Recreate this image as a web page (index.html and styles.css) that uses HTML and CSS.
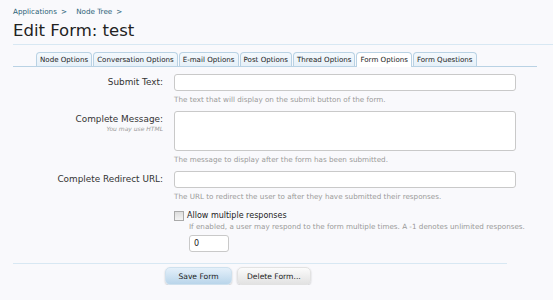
FILE: index.html
```
<!DOCTYPE html>
<html lang="en">
<head>
    <meta charset="UTF-8">
    <title>Edit Form: test</title>
    <link rel="stylesheet" href="styles.css">
</head>
<body>
    <div class="page">
        <div class="breadcrumb">
            <a href="#">Applications</a><span class="sep">&gt;</span>
            <a href="#">Node Tree</a><span class="sep">&gt;</span>
        </div>
        <h1 class="title">Edit Form: test</h1>

        <ul class="tabs">
            <li class="tab">Node Options</li>
            <li class="tab">Conversation Options</li>
            <li class="tab">E-mail Options</li>
            <li class="tab">Post Options</li>
            <li class="tab">Thread Options</li>
            <li class="tab active">Form Options</li>
            <li class="tab">Form Questions</li>
        </ul>

        <form class="form">
            <div class="ctrl-unit">
                <label class="ctrl-label" for="submit_text">Submit Text:</label>
                <div class="ctrl-body">
                    <input type="text" id="submit_text" class="text-input">
                    <p class="explain">The text that will display on the submit button of the form.</p>
                </div>
            </div>

            <div class="ctrl-unit">
                <div class="ctrl-label">
                    <label for="complete_message">Complete Message:</label>
                    <span class="hint">You may use HTML</span>
                </div>
                <div class="ctrl-body">
                    <textarea id="complete_message" class="text-input textarea"></textarea>
                    <p class="explain">The message to display after the form has been submitted.</p>
                </div>
            </div>

            <div class="ctrl-unit">
                <label class="ctrl-label" for="redirect_url">Complete Redirect URL:</label>
                <div class="ctrl-body">
                    <input type="text" id="redirect_url" class="text-input">
                    <p class="explain">The URL to redirect the user to after they have submitted their responses.</p>
                </div>
            </div>

            <div class="ctrl-unit">
                <div class="ctrl-label"></div>
                <div class="ctrl-body">
                    <label class="check-row"><span class="checkbox"></span>Allow multiple responses</label>
                    <div class="check-sub">
                        <p class="explain">If enabled, a user may respond to the form multiple times. A -1 denotes unlimited responses.</p>
                        <input type="text" class="text-input number-input" value="0">
                    </div>
                </div>
            </div>

            <div class="submit-unit">
                <button type="button" class="button primary">Save Form</button>
                <button type="button" class="button">Delete Form...</button>
            </div>
        </form>
    </div>
</body>
</html>
```

FILE: styles.css
```
body {
    margin: 0;
    background-color: #f9f9fc;
    font-family: "DejaVu Sans", Verdana, sans-serif;
    color: #222;
}

.page {
    padding: 7px 0 0 13px;
}

.breadcrumb {
    font-size: 7.2px;
    height: 10px;
    line-height: 10px;
}

.breadcrumb a {
    color: #2a6176;
    text-decoration: none;
}

.breadcrumb .sep {
    color: #2a6176;
    margin: 0 7px 0 4px;
}

.title {
    margin: 1px 0 0;
    font-size: 16.5px;
    font-weight: normal;
    line-height: 26px;
    height: 26px;
    border-bottom: 1px solid #d8e8f3;
    color: #222;
}

.tabs {
    list-style: none;
    margin: 7px 16px 0 0;
    padding: 0 0 0 23px;
    display: flex;
    gap: 1px;
    border-bottom: 1px solid #b9d2e4;
}

.tab {
    font-size: 7.1px;
    line-height: 13px;
    padding: 0 3px;
    border: 1px solid #b9d2e4;
    border-bottom: none;
    border-radius: 4px 4px 0 0;
    background: linear-gradient(#f4f9fd, #e6f0f8);
    color: #222;
}

.tab.active {
    background: #fff;
    margin-bottom: -1px;
    padding-bottom: 1px;
}

.form {
    padding-top: 7px;
}

.ctrl-unit {
    display: flex;
    margin-bottom: 6px;
}

.ctrl-label {
    width: 150px;
    padding-right: 11px;
    text-align: right;
    font-size: 8.9px;
    color: #333;
    padding-top: 3px;
    flex-shrink: 0;
}

.ctrl-label .hint {
    display: block;
    font-size: 6px;
    font-style: italic;
    color: #999;
    margin-top: 1px;
}

.ctrl-body {
    flex: 1;
}

.text-input {
    display: block;
    box-sizing: border-box;
    width: 342px;
    height: 17px;
    margin: 0;
    padding: 0 5px;
    border: 1px solid #c9c9c9;
    border-radius: 3px;
    background: #fff;
    font-family: "DejaVu Sans", Verdana, sans-serif;
    font-size: 8px;
    resize: none;
}

.textarea {
    height: 40px;
}

.explain {
    margin: 4px 0 0;
    font-size: 7.2px;
    line-height: 10px;
    color: #999;
}

.check-row {
    display: flex;
    align-items: center;
    font-size: 8px;
    color: #222;
    margin-top: 3px;
    line-height: 10px;
}

.checkbox {
    width: 10px;
    height: 10px;
    border: 1px solid #aaa;
    background: linear-gradient(#ddd, #f4f4f4);
    margin-right: 3px;
    box-sizing: border-box;
}

.check-sub {
    padding-left: 15px;
}

.check-sub .explain {
    margin-top: 1px;
}

.number-input {
    width: 40px;
    margin-top: 3px;
    padding: 0 4px;
    color: #222;
}

.submit-unit {
    margin: 11px 46px 0 0;
    border-top: 1px solid #d8e8f3;
    padding: 3px 0 0 152px;
    display: flex;
    gap: 5px;
}

.button {
    font-family: "DejaVu Sans", Verdana, sans-serif;
    font-size: 7.6px;
    height: 18px;
    padding: 0 9px;
    border: 1px solid #e2e2e2;
    border-radius: 5px;
    background: linear-gradient(#fbfbfb, #e2e2e2);
    box-shadow: 0 1px 2px rgba(0, 0, 0, 0.2);
    color: #222;
}

.button.primary {
    width: 67px;
    background: linear-gradient(#e4f0fa, #b9d5ea);
    border-color: #cfe1ee;
}
```
